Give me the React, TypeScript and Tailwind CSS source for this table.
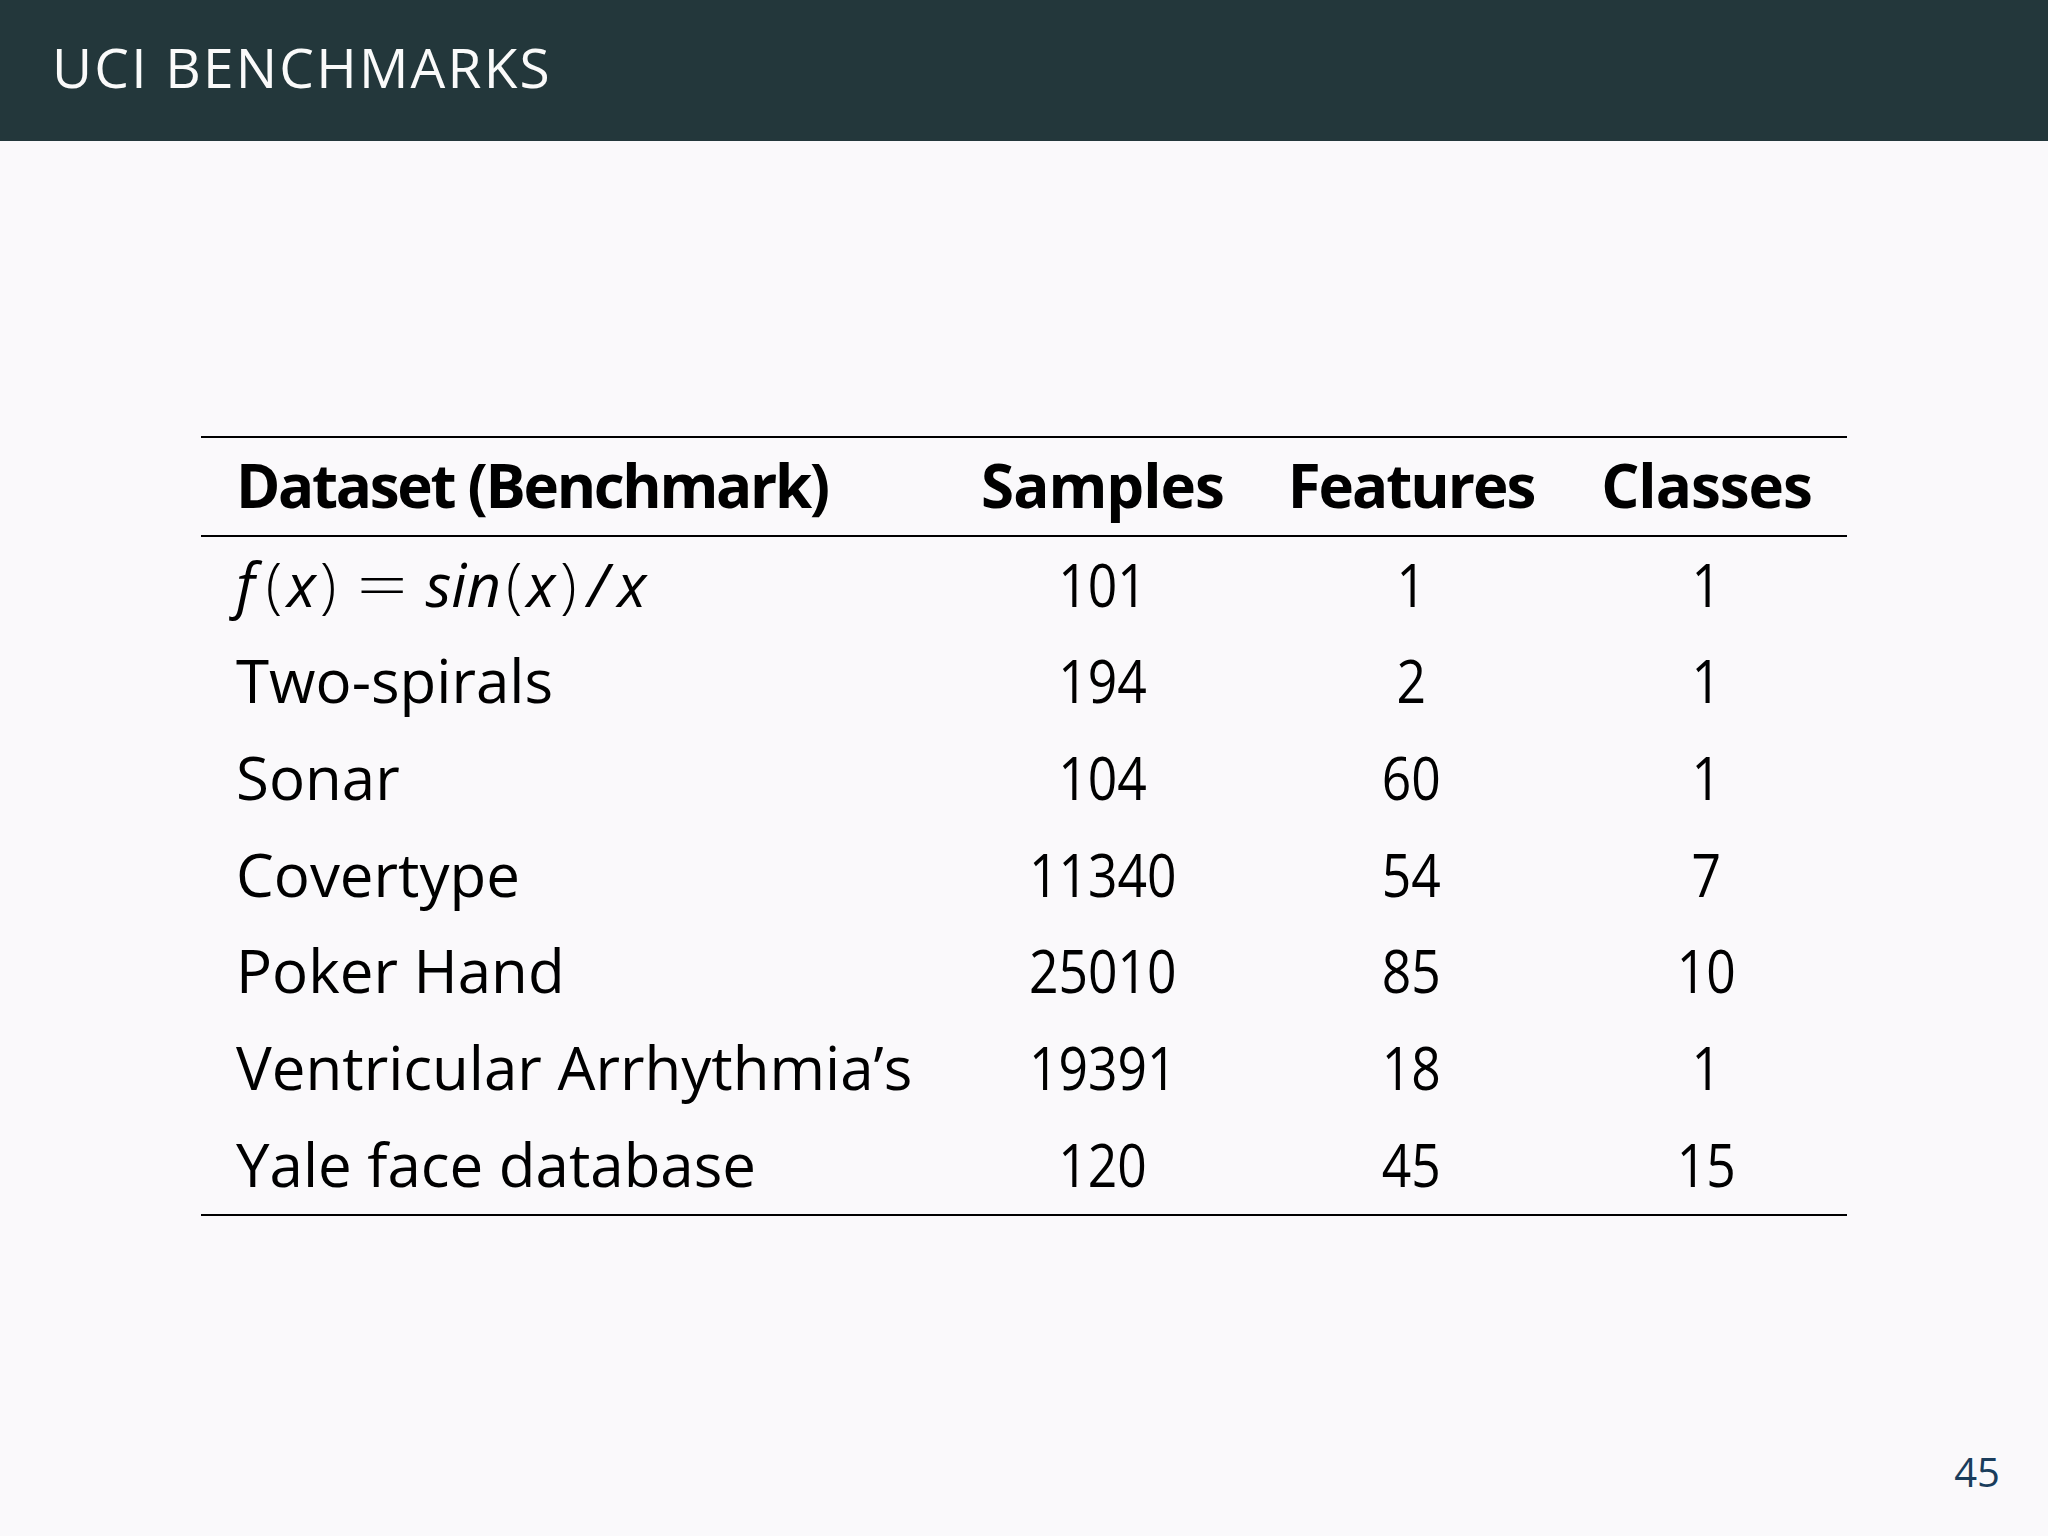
const paren = "font-light px-[3px]";

const rows: [React.ReactNode, string, string, string][] = [
  [
    <span>
      <i>f</i>
      <span className={`${paren} ml-[8px]`}>(</span>
      <i className="ml-[2px]">x</i>
      <span className={`${paren} ml-[1px]`}>)</span>
      <span className="mx-[26px] inline-block scale-x-150 font-light">=</span>
      <i>sin</i>
      <span className={`${paren} ml-[2px]`}>(</span>
      <i className="ml-[1px]">x</i>
      <span className={`${paren} ml-[2px]`}>)</span>
      <i className="ml-[8px]">/</i>
      <i className="ml-[9px]">x</i>
    </span>,
    "101",
    "1",
    "1",
  ],
  ["Two-spirals", "194", "2", "1"],
  ["Sonar", "104", "60", "1"],
  ["Covertype", "11340", "54", "7"],
  ["Poker Hand", "25010", "85", "10"],
  ["Ventricular Arrhythmia\u2019s", "19391", "18", "1"],
  ["Yale face database", "120", "45", "15"],
];

const grid = "grid grid-cols-[748px_307px_310px_281px]";
const cell = "h-[96.7px] leading-[89px] pt-[3px] pb-[4.7px] whitespace-nowrap";

function Num({ value }: { value: string }) {
  return (
    <div className={`${cell} text-center`}>
      <span className="inline-block scale-x-[0.86]">{value}</span>
    </div>
  );
}

export default function App() {
  return (
    <div
      className="flex h-[1536px] w-[2048px] flex-col bg-[#faf9fb] text-black"
      style={{ fontFamily: '"Open Sans", "Noto Sans", sans-serif' }}
    >
      <div className="flex h-[141px] shrink-0 items-center bg-[#23373b] px-[52px] pb-[6px]">
        <h1 className="text-[55px] font-normal tracking-[2.2px] text-[#fafafa]">
          UCI BENCHMARKS
        </h1>
      </div>

      <div className="ml-[201px] mt-[295px] w-[1646px] text-[60px]">
        <div className={`${grid} border-y-[2px] border-black font-bold`}>
          <div className={`${cell} pl-[35px] tracking-[-2.3px]`}>Dataset (Benchmark)</div>
          <div className={`${cell} text-center tracking-[-1px]`}>Samples</div>
          <div className={`${cell} text-center tracking-[-2px]`}>Features</div>
          <div className={`${cell} text-center tracking-[-1px]`}>Classes</div>
        </div>
        <div className="border-b-[2px] border-black">
          {rows.map(([name, samples, features, classes], i) => (
            <div key={i} className={grid}>
              <div className={`${cell} pl-[35px]`}>{name}</div>
              <Num value={samples} />
              <Num value={features} />
              <Num value={classes} />
            </div>
          ))}
        </div>
      </div>

      <div className="mt-auto flex justify-end pb-[34px] pr-[48px]">
        <span className="text-[40px] text-[#1a3d5c]">45</span>
      </div>
    </div>
  );
}
